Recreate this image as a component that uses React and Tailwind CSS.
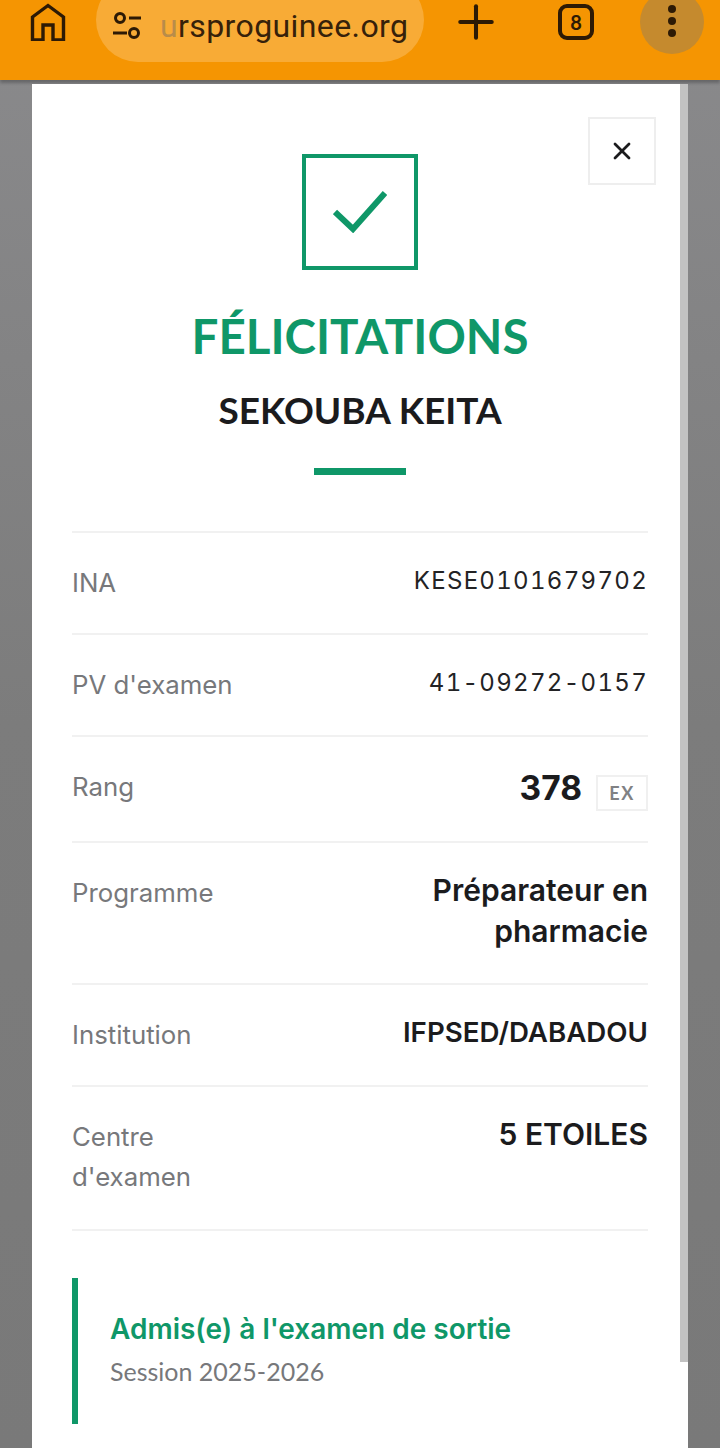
import { X, Plus } from 'lucide-react';

const GREEN = 'text-[#0f9768]';

const rows = [
  { label: 'INA', value: 'KESE0101679702', mono: true },
  { label: "PV d'examen", value: '41-09272-0157', mono: true },
  { label: 'Rang', rank: '378' },
  { label: 'Programme', value: 'Préparateur en pharmacie' },
  { label: 'Institution', value: 'IFPSED/DABADOU', small: true },
  { label: "Centre d'examen", value: '5 ETOILES', narrow: true },
];

function Row({ row }) {
  return (
    <div className={`flex justify-between gap-6 border-b-2 border-[#f1f1f1] pt-[30px] ${row.narrow ? 'pb-[32px]' : 'pb-[30px]'}`}>
      <div className={`font-['Inter'] text-[25.8px] leading-[40px] text-[#77787b] ${row.narrow ? 'w-[140px]' : ''}`}>{row.label}</div>
      {row.rank ? (
        <div className="-mt-[1px] mb-[1px] flex h-[44px] items-center gap-[14px]">
          <span className="font-['Inter'] text-[33.5px] font-bold text-[#1b1b1d]">{row.rank}</span>
          <span className="mt-[10px] flex h-[36px] w-[52px] items-center justify-center border-2 border-[#f0f0f0] text-[18px] font-bold tracking-[1.5px] text-[#808184]">EX</span>
        </div>
      ) : row.mono ? (
        <div className="font-['Inter'] text-[24px] leading-[36px] tracking-[1.3px] text-[#232325] tabular-nums">{row.value}</div>
      ) : (
        <div className={`-mt-[3px] mb-[1px] max-w-[250px] text-right font-['Inter'] leading-[41px] font-semibold text-[#1b1b1d] ${row.small ? 'text-[27.7px]' : 'text-[30px]'}`}>{row.value}</div>
      )}
    </div>
  );
}

export default function App() {
  return (
    <div className="h-[1448px] w-[720px] overflow-hidden bg-gradient-to-b from-[#8a8a8c] via-[#7c7c7c] to-[#797979] font-['Lato',sans-serif]">
      {/* barre du navigateur */}
      <div className="flex h-[80px] items-start bg-[#f59502] shadow-[0_3px_3px_rgba(0,0,0,0.25)]">
        <div className="flex h-[44px] w-[96px] items-center justify-center">
          <svg width="36" height="38" viewBox="0 0 36 38" fill="none" stroke="#2d1a05" strokeWidth="3.4" strokeLinejoin="miter">
            <path d="M2.5 37V14L18 2.5 33.5 14V37H23V22H13V37H2.5Z" />
          </svg>
        </div>
        <div className="-mt-[22px] flex h-[84px] w-[328px] items-center rounded-[42px] bg-[#f8ab36] pl-[16px] pt-[12px]">
          <svg width="32" height="32" viewBox="0 0 32 32" fill="none" stroke="#2d1a05" strokeWidth="3">
            <circle cx="8" cy="8" r="4.5" />
            <path d="M17 8H29M1 23H15" />
            <circle cx="22" cy="23" r="4.5" />
          </svg>
          <span className="ml-[16px] font-['Roboto'] text-[32px] tracking-[0.4px] text-[#36210a]">
            <span className="text-[#b98c4a]">u</span>rsproguinee.org
          </span>
        </div>
        <div className="flex h-[44px] w-[104px] items-center justify-center">
          <Plus size={54} strokeWidth={1.8} color="#2d1a05" />
        </div>
        <div className="flex h-[44px] w-[96px] items-center justify-center">
          <div className="flex h-[36px] w-[36px] items-center justify-center rounded-[9px] border-[4px] border-[#2d1a05] text-[20px] font-bold text-[#2d1a05]">8</div>
        </div>
        <div className="-mt-[10px] ml-[16px] flex h-[64px] w-[64px] flex-col items-center justify-center gap-[4px] rounded-full bg-[#c58a2e] pb-[2px]">
          <span className="h-[8px] w-[8px] rounded-full bg-[#2d1a05]" />
          <span className="h-[8px] w-[8px] rounded-full bg-[#2d1a05]" />
          <span className="h-[8px] w-[8px] rounded-full bg-[#2d1a05]" />
        </div>
      </div>

      {/* fenetre de resultat */}
      <div className="px-[32px] pt-[4px]">
        <div className="relative h-[1400px] bg-white px-[40px] pt-[70px]">
          <div className="absolute top-0 right-0 h-[1278px] w-[8px] bg-[#c2c2c2]" />
          <button className="absolute top-[33px] right-[32px] flex h-[68px] w-[68px] items-center justify-center border-2 border-[#eeeeee]">
            <X size={28} strokeWidth={2.4} color="#1b1b1d" />
          </button>

          <div className="flex flex-col items-center">
            <div className="flex h-[116px] w-[116px] items-center justify-center border-[4px] border-[#0f9768]">
              <svg width="54" height="42" viewBox="0 0 54 42" fill="none" stroke="#0f9768" strokeWidth="6">
                <path d="M2 21 20 38 52 2" />
              </svg>
            </div>
            <h1 className={`mt-[39px] text-[47.5px] leading-[54px] font-bold ${GREEN}`}>FÉLICITATIONS</h1>
            <h2 className="mt-[25px] text-[37px] leading-[44px] font-bold text-[#1b1b1d]">SEKOUBA KEITA</h2>
            <div className="mt-[36px] h-[7px] w-[92px] bg-[#0f9768]" />
          </div>

          <div className="mt-[56px] border-t-2 border-[#f1f1f1]">
            {rows.map((row) => (
              <Row key={row.label} row={row} />
            ))}
          </div>

          <div className="mt-[47px] flex h-[146px] flex-col justify-center border-l-[6px] border-[#0f9768] pl-[32px] pb-[4px]">
            <div className={`font-['Inter'] text-[28px] leading-[40px] font-semibold ${GREEN}`}>Admis(e) à l'examen de sortie</div>
            <div className="mt-[4px] text-[25px] leading-[36px] text-[#77787b]">Session 2025-2026</div>
          </div>
        </div>
      </div>
    </div>
  );
}
